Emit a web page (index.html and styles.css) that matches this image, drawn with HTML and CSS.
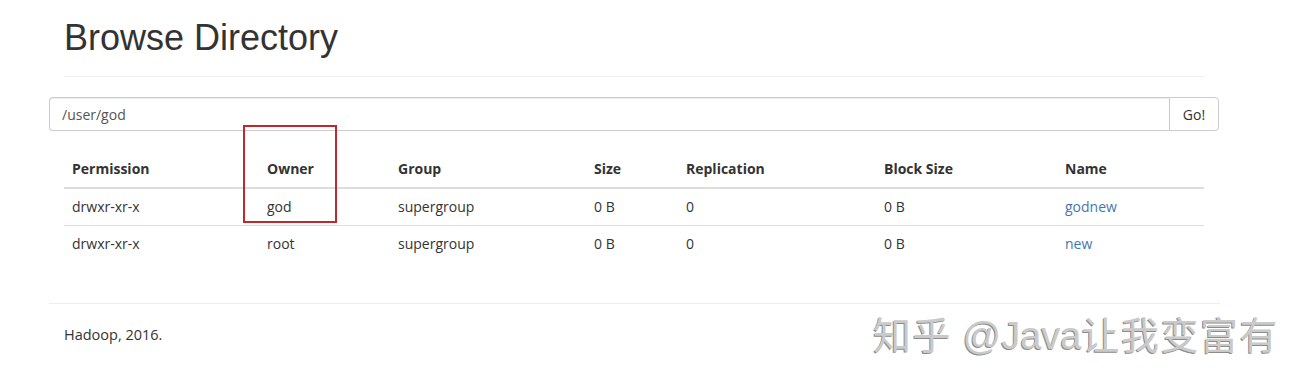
FILE: index.html
```html
<!DOCTYPE html>
<html>
<head>
<meta charset="utf-8">
<link rel="stylesheet" href="styles.css">
</head>
<body>
<div class="page">
  <div class="page-header">
    <h1>Browse Directory</h1>
  </div>
  <div class="input-group">
    <input class="path" type="text" value="/user/god">
    <button class="go">Go!</button>
  </div>
  <div class="table-wrap">
    <table class="listing">
      <thead>
        <tr>
          <th class="c1">Permission</th>
          <th class="c2">Owner</th>
          <th class="c3">Group</th>
          <th class="c4">Size</th>
          <th class="c5">Replication</th>
          <th class="c6">Block Size</th>
          <th class="c7">Name</th>
        </tr>
      </thead>
      <tbody>
        <tr>
          <td>drwxr-xr-x</td><td>god</td><td>supergroup</td><td>0 B</td><td>0</td><td>0 B</td><td><a href="#">godnew</a></td>
        </tr>
        <tr>
          <td>drwxr-xr-x</td><td>root</td><td>supergroup</td><td>0 B</td><td>0</td><td>0 B</td><td><a href="#">new</a></td>
        </tr>
      </tbody>
    </table>
    <div class="highlight"></div>
  </div>
  <hr class="footer-rule">
  <p class="footer">Hadoop, 2016.</p>
  <div class="watermark"><span class="cjk">知乎</span> @Java<span class="cjk">让我变富有</span></div>
</div>
</body>
</html>
```

FILE: styles.css
```css
html, body {
  margin: 0;
  padding: 0;
  background: #fff;
}
.page {
  position: relative;
  width: 1311px;
  height: 389px;
  overflow: hidden;
  font-family: "Open Sans", "Noto Sans CJK SC", sans-serif;
  font-size: 14px;
  color: #333;
}
.page-header {
  margin: 0 107px 0 64px;
  padding-top: 17px;
  padding-bottom: 4px;
  border-bottom: 1px solid #eee;
  height: 55px;
}
.page-header h1 {
  margin: 0;
  font-family: "Liberation Sans", Arial, sans-serif;
  font-weight: 400;
  font-size: 36px;
  line-height: 42px;
  color: #333;
}
.input-group {
  display: flex;
  margin: 20px 92px 0 49px;
  height: 34px;
}
.path {
  flex: 1;
  box-sizing: border-box;
  height: 34px;
  margin: 0;
  padding: 6px 12px;
  border: 1px solid #ccc;
  border-right: none;
  border-radius: 4px 0 0 4px;
  font-family: "Open Sans", "Noto Sans CJK SC", sans-serif;
  font-size: 14px;
  color: #555;
  outline: none;
  box-shadow: inset 0 1px 1px rgba(0,0,0,.075);
}
.go {
  box-sizing: border-box;
  width: 50px;
  height: 34px;
  margin: 0;
  padding: 0;
  border: 1px solid #ccc;
  border-radius: 0 4px 4px 0;
  background: #fff;
  font-family: "Open Sans", "Noto Sans CJK SC", sans-serif;
  font-size: 14px;
  color: #333;
}
.table-wrap {
  position: relative;
  margin: 20px 107px 0 64px;
}
.listing {
  width: 1140px;
  border-collapse: collapse;
  border-spacing: 0;
  table-layout: fixed;
}
.listing th, .listing td {
  padding: 8px 8px;
  line-height: 20px;
  text-align: left;
  vertical-align: middle;
}
.listing th {
  font-weight: 700;
  border-bottom: 2px solid #ddd;
}
.listing tbody tr + tr td {
  border-top: 1px solid #ddd;
}
.c1 { width: 179px; }
.c2 { width: 115px; }
.c3 { width: 180px; }
.c4 { width: 76px; }
.c5 { width: 182px; }
.c6 { width: 165px; }
.c7 { width: 131px; }
.listing a {
  color: #3f78b0;
  text-decoration: none;
}
.highlight {
  position: absolute;
  left: 179px;
  top: -26px;
  width: 90px;
  height: 94px;
  border: 2px solid #c0282f;
}
.footer-rule {
  margin: 41px 91px 0 49px;
  border: 0;
  border-top: 1px solid #eee;
  height: 0;
}
.footer {
  margin: 21px 0 0 64px;
  line-height: 20px;
  font-size: 14.5px;
  font-family: "Open Sans", "Noto Sans CJK SC", sans-serif;
}
.watermark {
  position: absolute;
  left: 873px;
  top: 310px;
  font-family: "Liberation Sans", "Noto Sans CJK SC", sans-serif;
  font-size: 38px;
  line-height: 46px;
  color: #cacaca;
  text-shadow: -1px 1px 0 #8c8c8c;
  white-space: nowrap;
}
.watermark .cjk {
  font-family: "Noto Sans CJK SC", sans-serif;
  letter-spacing: 1.5px;
}
```
